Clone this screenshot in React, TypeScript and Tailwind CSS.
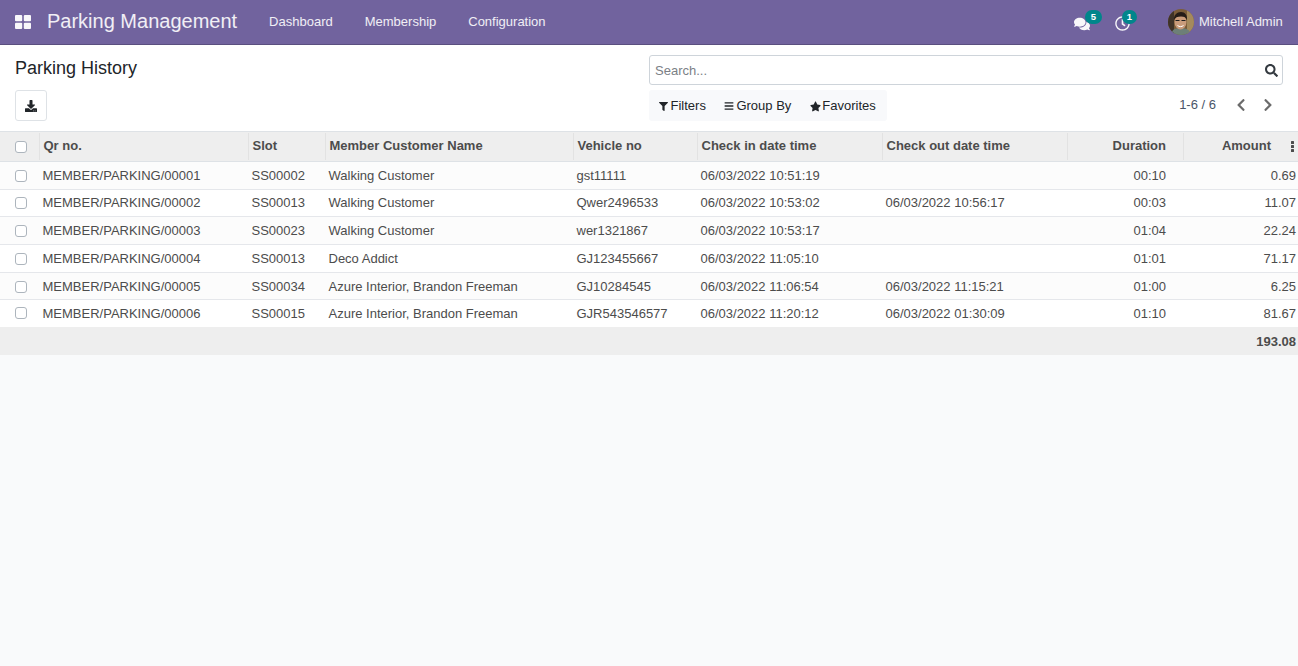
import { FaBars, FaChevronLeft, FaChevronRight, FaComments, FaDownload, FaFilter, FaRegClock, FaSearch, FaStar } from "react-icons/fa";

const rows = [
  ["MEMBER/PARKING/00001", "SS00002", "Walking Customer", "gst11111", "06/03/2022 10:51:19", "", "00:10", "0.69"],
  ["MEMBER/PARKING/00002", "SS00013", "Walking Customer", "Qwer2496533", "06/03/2022 10:53:02", "06/03/2022 10:56:17", "00:03", "11.07"],
  ["MEMBER/PARKING/00003", "SS00023", "Walking Customer", "wer1321867", "06/03/2022 10:53:17", "", "01:04", "22.24"],
  ["MEMBER/PARKING/00004", "SS00013", "Deco Addict", "GJ123455667", "06/03/2022 11:05:10", "", "01:01", "71.17"],
  ["MEMBER/PARKING/00005", "SS00034", "Azure Interior, Brandon Freeman", "GJ10284545", "06/03/2022 11:06:54", "06/03/2022 11:15:21", "01:00", "6.25"],
  ["MEMBER/PARKING/00006", "SS00015", "Azure Interior, Brandon Freeman", "GJR543546577", "06/03/2022 11:20:12", "06/03/2022 01:30:09", "01:10", "81.67"],
];

// row heights alternate because the original rows are 27.8px and get snapped
const rowHeights = ["h-[28px]", "h-[27px]", "h-[28px]", "h-[28px]", "h-[27px] [&>td]:pt-[1px]", "h-[27px]"];

const Checkbox = () => (
  <span className="block w-[12px] h-[12px] ml-[15px] bg-white border border-[#adb5bd] rounded-[3px]" />
);

const Th = ({ w, right, children }: { w: string; right?: boolean; children: React.ReactNode }) => (
  <th className={`${w} h-[30px] p-0 pb-[2px] font-bold relative ${right ? "text-right" : "text-left"}`}>
    <span className="absolute left-0 top-[1px] bottom-[1px] w-px bg-[#e2e2e2]" />
    {children}
  </th>
);

const Avatar = () => (
  <svg width="26" height="26" viewBox="0 0 26 26" className="rounded-full">
    <rect width="26" height="26" fill="#7a5c38" />
    <rect x="0" y="0" width="6" height="26" fill="#3f3328" />
    <rect x="19" y="0" width="7" height="26" fill="#a58a5c" />
    <path d="M3 26c1-6 4-7 10-7s9 2 10 7z" fill="#6d7f78" />
    <ellipse cx="12.500" cy="13" rx="6" ry="7.500" fill="#c99b7a" />
    <path d="M6 11c-.5-5 3-8 7-8s6.500 3 6 8c-1-2.500-2.500-3.500-6-3.500s-6 1-7 3.500z" fill="#241c17" />
    <path d="M7.500 11.500h4M13.500 11.500h4" stroke="#1f1f1f" strokeWidth="1.200" />
    <path d="M9.500 16.500c2 1.500 4 1.500 6 0" stroke="#fff" strokeWidth="1" fill="none" />
  </svg>
);

export default function App() {
  return (
    <div className="min-h-[666px] bg-[#f9fafb] text-[13px] leading-[19.500px] text-[#4c4c4c] font-['Liberation_Sans',Arial,sans-serif]">
      <header className="h-[45px] bg-[#71639e] border-b border-[#5a4f7f] flex items-center text-white">
        <svg width="16" height="14" viewBox="0 0 16 14" className="ml-[15px] fill-white/95">
          <rect width="7.200" height="6.200" rx="1" />
          <rect x="8.800" width="7.200" height="6.200" rx="1" />
          <rect y="7.800" width="7.200" height="6.200" rx="1" />
          <rect x="8.800" y="7.800" width="7.200" height="6.200" rx="1" />
        </svg>
        <span className="ml-[16px] text-[20px] text-white/90">Parking Management</span>
        <nav className="ml-[32px] flex gap-[32px] text-white/90">
          <span>Dashboard</span>
          <span>Membership</span>
          <span>Configuration</span>
        </nav>
        <div className="ml-auto flex items-center">
          <span className="relative w-[17px] h-[20px] flex items-center">
            <FaComments className="text-[16px] text-white/95 mt-[3px]" />
            <span className="absolute left-[11px] top-[-2.500px] w-[17px] h-[14px] rounded-full bg-[#00868b] text-white text-[9.500px] leading-[14px] font-bold text-center">5</span>
          </span>
          <span className="relative w-[17px] h-[20px] ml-[24px] flex items-center">
            <FaRegClock className="text-[15px] text-white/95 mt-[2px]" />
            <span className="absolute left-[7px] top-[-2.500px] w-[15px] h-[14px] rounded-full bg-[#00868b] text-white text-[9.500px] leading-[14px] font-bold text-center">1</span>
          </span>
          <span className="ml-[36px] block h-[26px]"><Avatar /></span>
          <span className="ml-[5px] mr-[15px] w-[84px] whitespace-nowrap text-white/90">Mitchell Admin</span>
        </div>
      </header>

      <div className="h-[86px] bg-white flex">
        <div className="w-[649px] pl-[15px]">
          <h1 className="mt-[10px] text-[18px] leading-[27px] text-[#212529]">Parking History</h1>
          <button className="mt-[8px] w-[32px] h-[31px] bg-white border border-[#dee2e6] rounded-[3px] flex items-center justify-center text-[#212529]">
            <FaDownload className="text-[12px]" />
          </button>
        </div>
        <div className="w-[634px]">
          <div className="mt-[10px] h-[30px] bg-white border border-[#ced4da] rounded-[3px] flex items-center px-[5px]">
            <span className="text-[#7b8086] pt-[1px]">Search...</span>
            <FaSearch className="ml-auto text-[13px] text-[#343a40] mr-[-1px]" />
          </div>
          <div className="mt-[5px] flex justify-between">
            <div className="w-[238px] h-[31px] bg-[#f8f9fb] rounded-[3px] flex items-center pl-[10px] text-[#212529]">
              <FaFilter className="text-[9px] mr-[2.500px] mt-[2px]" />
              <span>Filters</span>
              <FaBars className="text-[10px] ml-[18px] mr-[2.500px] mt-[1px]" />
              <span>Group By</span>
              <FaStar className="text-[11px] ml-[18.500px] mr-[1.500px] mt-[1px]" />
              <span>Favorites</span>
            </div>
            <div className="flex items-center h-[29px] text-[#4a5568]">
              <span>1-6 / 6</span>
              <FaChevronLeft className="ml-[18px] text-[14px] text-[#6b6b6b]" />
              <FaChevronRight className="ml-[13px] mr-[8px] text-[14px] text-[#6b6b6b]" />
            </div>
          </div>
        </div>
      </div>

      <table className="w-[1298px] table-fixed border-collapse bg-white">
        <thead>
          <tr className="bg-[#eeeeee] border-t border-[#dee2e6] border-b">
            <th className="w-[39px] p-0"><Checkbox /></th>
            <Th w="w-[209px]"><span className="pl-[4.500px]">Qr no.</span></Th>
            <Th w="w-[77px]"><span className="pl-[4.500px]">Slot</span></Th>
            <Th w="w-[248px]"><span className="pl-[4.500px]">Member Customer Name</span></Th>
            <Th w="w-[124px]"><span className="pl-[4.500px]">Vehicle no</span></Th>
            <Th w="w-[185px]"><span className="pl-[4.500px]">Check in date time</span></Th>
            <Th w="w-[185px]"><span className="pl-[4.500px]">Check out date time</span></Th>
            <Th w="w-[116px]" right><span className="pr-[17px]">Duration</span></Th>
            <Th w="w-[115px]" right>
              <span className="pr-[27px]">Amount</span>
              <svg width="3" height="11" viewBox="0 0 3 11" className="absolute right-[4px] top-[9px] fill-[#4c4c4c]">
                <rect width="3" height="3" rx="0.500" />
                <rect y="4" width="3" height="3" rx="0.500" />
                <rect y="8" width="3" height="3" rx="0.500" />
              </svg>
            </Th>
          </tr>
        </thead>
        <tbody>
          {rows.map((row, i) => (
            <tr key={row[0]} className={`${rowHeights[i]} border-t border-[#e5e7eb] ${i % 2 === 0 ? "bg-[#fcfcfc]" : "bg-white"}`}>
              <td className="p-0"><Checkbox /></td>
              <td className="p-0 pl-[3.500px]">{row[0]}</td>
              <td className="p-0 pl-[3.500px]">{row[1]}</td>
              <td className="p-0 pl-[3.500px]">{row[2]}</td>
              <td className="p-0 pl-[3.500px]">{row[3]}</td>
              <td className="p-0 pl-[3.500px]">{row[4]}</td>
              <td className="p-0 pl-[3.500px]">{row[5]}</td>
              <td className="p-0 pr-[17px] text-right">{row[6]}</td>
              <td className="p-0 pr-[2px] text-right">{row[7]}</td>
            </tr>
          ))}
        </tbody>
        <tfoot>
          <tr className="h-[28px] bg-[#eeeeee]">
            <td colSpan={8} />
            <td className="p-0 pt-[3px] pr-[2px] text-right font-bold">193.08</td>
          </tr>
        </tfoot>
      </table>
    </div>
  );
}
